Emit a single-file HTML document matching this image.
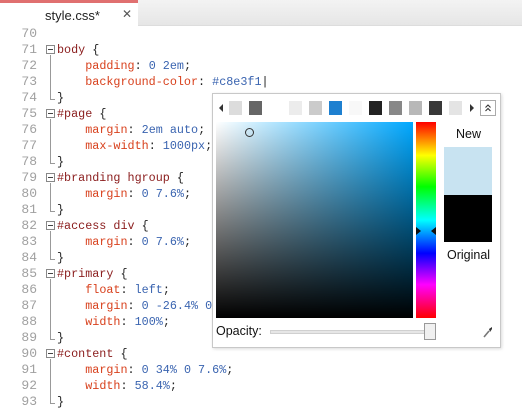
<!DOCTYPE html>
<html><head><style>
*{margin:0;padding:0;box-sizing:border-box}
body{width:522px;height:411px;overflow:hidden;background:#fff;position:relative;font-family:"Liberation Sans",sans-serif}
.tabbar{position:absolute;left:0;top:0;width:522px;height:26px;background:linear-gradient(#f3f3f3,#e6e6e6);border-bottom:1px solid #ddd}
.tab{position:absolute;left:0;top:0;width:138px;height:27px;background:#fff;border-top:3px solid #e07070}
.tab span{position:absolute;left:45px;top:5px;font-size:13px;color:#222}
.tab b{position:absolute;left:122px;top:4px;font-size:12px;font-weight:normal;color:#555}
.ln{position:absolute;left:0;width:37px;text-align:right;font:13px "Liberation Mono",monospace;color:#a0a0a0;height:16px;line-height:16px}
.cd{position:absolute;left:57px;font:11.75px "Liberation Mono",monospace;height:16px;line-height:16px;white-space:pre;color:#222}
.s{color:#8a1c1c}.p{color:#d8401c}.v{color:#3a64b0}
.fb{position:absolute;left:46px;width:9px;height:9px;border:1px solid #888;background:#fff}
.fb:after{content:"";position:absolute;left:1px;top:3px;width:5px;height:1px;background:#444}
.vl{position:absolute;left:50px;width:1px;background:#999}
.ce{position:absolute;left:50px;width:5px;height:1px;background:#999}
.pop{position:absolute;left:212px;top:93px;width:289px;height:255px;background:#fff;border:1px solid #c8c8c8;box-shadow:1px 1px 3px rgba(0,0,0,.15)}
.sw{position:absolute;top:101px;width:13px;height:14px}
</style></head><body>
<div class="tabbar"></div>
<div class="tab"><span>style.css*</span><b>✕</b></div>

<div class="ln" style="top:26px">70</div>
<div class="ln" style="top:42px">71</div><div class="fb" style="top:45px"></div><div class="cd" style="top:42px"><span class="s">body</span> {</div>
<div class="ln" style="top:58px">72</div><div class="cd" style="top:58px">    <span class="p">padding</span>: <span class="v">0 2em</span>;</div>
<div class="ln" style="top:74px">73</div><div class="cd" style="top:74px">    <span class="p">background-color</span>: <span class="v">#c8e3f1</span>|</div>
<div class="ln" style="top:90px">74</div><div class="cd" style="top:90px">}</div>
<div class="vl" style="top:55px;height:44px"></div><div class="ce" style="top:99px"></div>

<div class="ln" style="top:106px">75</div><div class="fb" style="top:109px"></div><div class="cd" style="top:106px"><span class="s">#page</span> {</div>
<div class="ln" style="top:122px">76</div><div class="cd" style="top:122px">    <span class="p">margin</span>: <span class="v">2em auto</span>;</div>
<div class="ln" style="top:138px">77</div><div class="cd" style="top:138px">    <span class="p">max-width</span>: <span class="v">1000px</span>;</div>
<div class="ln" style="top:154px">78</div><div class="cd" style="top:154px">}</div>
<div class="vl" style="top:119px;height:44px"></div><div class="ce" style="top:163px"></div>

<div class="ln" style="top:170px">79</div><div class="fb" style="top:173px"></div><div class="cd" style="top:170px"><span class="s">#branding hgroup</span> {</div>
<div class="ln" style="top:186px">80</div><div class="cd" style="top:186px">    <span class="p">margin</span>: <span class="v">0 7.6%</span>;</div>
<div class="ln" style="top:202px">81</div><div class="cd" style="top:202px">}</div>
<div class="vl" style="top:183px;height:28px"></div><div class="ce" style="top:211px"></div>

<div class="ln" style="top:218px">82</div><div class="fb" style="top:221px"></div><div class="cd" style="top:218px"><span class="s">#access div</span> {</div>
<div class="ln" style="top:234px">83</div><div class="cd" style="top:234px">    <span class="p">margin</span>: <span class="v">0 7.6%</span>;</div>
<div class="ln" style="top:250px">84</div><div class="cd" style="top:250px">}</div>
<div class="vl" style="top:231px;height:28px"></div><div class="ce" style="top:259px"></div>

<div class="ln" style="top:266px">85</div><div class="fb" style="top:269px"></div><div class="cd" style="top:266px"><span class="s">#primary</span> {</div>
<div class="ln" style="top:282px">86</div><div class="cd" style="top:282px">    <span class="p">float</span>: <span class="v">left</span>;</div>
<div class="ln" style="top:298px">87</div><div class="cd" style="top:298px">    <span class="p">margin</span>: <span class="v">0 -26.4% 0</span></div>
<div class="ln" style="top:314px">88</div><div class="cd" style="top:314px">    <span class="p">width</span>: <span class="v">100%</span>;</div>
<div class="ln" style="top:330px">89</div><div class="cd" style="top:330px">}</div>
<div class="vl" style="top:279px;height:60px"></div><div class="ce" style="top:339px"></div>

<div class="ln" style="top:346px">90</div><div class="fb" style="top:349px"></div><div class="cd" style="top:346px"><span class="s">#content</span> {</div>
<div class="ln" style="top:362px">91</div><div class="cd" style="top:362px">    <span class="p">margin</span>: <span class="v">0 34% 0 7.6%</span>;</div>
<div class="ln" style="top:378px">92</div><div class="cd" style="top:378px">    <span class="p">width</span>: <span class="v">58.4%</span>;</div>
<div class="ln" style="top:394px">93</div><div class="cd" style="top:394px">}</div>
<div class="vl" style="top:359px;height:44px"></div><div class="ce" style="top:403px"></div>

<div class="pop"></div>
<div style="position:absolute;left:219px;top:104px;width:0;height:0;border-top:4px solid transparent;border-bottom:4px solid transparent;border-right:4px solid #333"></div>
<div class="sw" style="left:229px;background:#dcdcdc"></div>
<div class="sw" style="left:249px;background:#666"></div>
<div class="sw" style="left:289px;background:#ececec"></div>
<div class="sw" style="left:309px;background:#cbcbcb"></div>
<div class="sw" style="left:329px;background:#1e80d0"></div>
<div class="sw" style="left:349px;background:#f8f8f8"></div>
<div class="sw" style="left:369px;background:#222"></div>
<div class="sw" style="left:389px;background:#888"></div>
<div class="sw" style="left:409px;background:#b8b8b8"></div>
<div class="sw" style="left:429px;background:#383838"></div>
<div class="sw" style="left:449px;background:#e4e4e4"></div>
<div style="position:absolute;left:470px;top:104px;width:0;height:0;border-top:4px solid transparent;border-bottom:4px solid transparent;border-left:4px solid #333"></div>
<div style="position:absolute;left:480px;top:100px;width:16px;height:16px;border:1px solid #aaa">
<svg width="14" height="14" viewBox="0 0 14 14" style="position:absolute;left:0;top:0"><path d="M4.5 6.5 L7 4 L9.5 6.5 M4.5 10 L7 7.5 L9.5 10" stroke="#333" fill="none" stroke-width="1.1"/></svg></div>

<div style="position:absolute;left:216px;top:122px;width:197px;height:196px;background:linear-gradient(to bottom,rgba(0,0,0,0),#000),linear-gradient(to right,#fff,#00a8ff)"></div>
<div style="position:absolute;left:245px;top:128px;width:9px;height:9px;border:1px solid #333;border-radius:50%"></div>
<div style="position:absolute;left:416px;top:122px;width:20px;height:196px;background:linear-gradient(#f00,#ff0 17%,#0f0 33%,#0ff 50%,#00f 67%,#f0f 83%,#f00)"></div>
<div style="position:absolute;left:416px;top:227px;width:0;height:0;border-top:4px solid transparent;border-bottom:4px solid transparent;border-left:5px solid #111"></div>
<div style="position:absolute;left:431px;top:227px;width:0;height:0;border-top:4px solid transparent;border-bottom:4px solid transparent;border-right:5px solid #111"></div>

<div style="position:absolute;left:456px;top:127px;font-size:12.5px;color:#111">New</div>
<div style="position:absolute;left:444px;top:147px;width:48px;height:48px;background:#c8e3f1"></div>
<div style="position:absolute;left:444px;top:195px;width:48px;height:47px;background:#000"></div>
<div style="position:absolute;left:447px;top:248px;font-size:12.5px;color:#111">Original</div>

<div style="position:absolute;left:216px;top:324px;font-size:12.5px;color:#111">Opacity:</div>
<div style="position:absolute;left:270px;top:330px;width:160px;height:4px;background:#e6e6e6;border:1px solid #d0d0d0"></div>
<div style="position:absolute;left:424px;top:323px;width:12px;height:17px;background:#f0f0f0;border:1px solid #999"></div>
<div style="position:absolute;left:483px;top:325px;width:10px;height:12px">
<svg width="10" height="12" viewBox="0 0 10 12"><path d="M1 11 L6 5" stroke="#777" stroke-width="1.6"/><path d="M6 3 L9 1 L9 3 L7 6 Z" fill="#333"/></svg></div>
</body></html>
